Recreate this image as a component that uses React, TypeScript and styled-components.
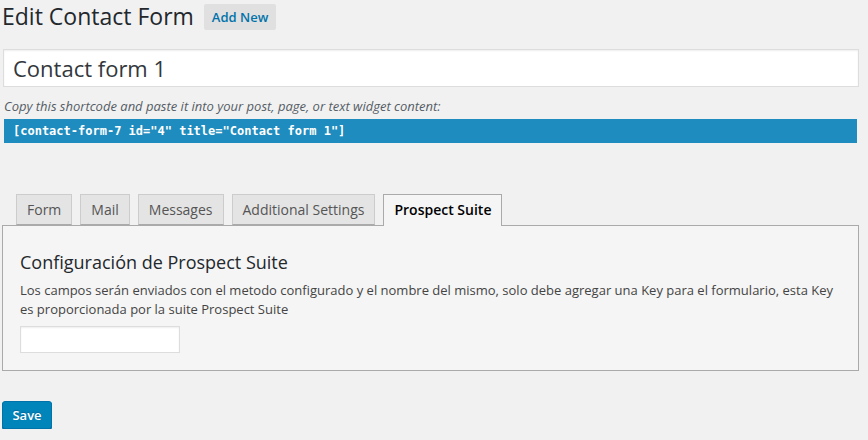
import React from "react";
import styled, { createGlobalStyle } from "styled-components";

const Global = createGlobalStyle`
  html, body { margin: 0; padding: 0; background: #f1f1f1; }
  body { font-family: "Open Sans", "Noto Sans", sans-serif; color: #444; }
  * { box-sizing: border-box; }
`;

const Wrap = styled.div`
  width: 857px;
  margin-left: 2px;
  display: flex;
  flex-direction: column;
`;

const Header = styled.div`
  display: flex;
  align-items: flex-start;
  gap: 10px;
  height: 49px;
`;

const Title = styled.h1`
  margin: 2px 0 0 0;
  font-size: 23px;
  line-height: 29px;
  font-weight: 400;
  color: #23282d;
`;

const AddNew = styled.button`
  margin-top: 4px;
  height: 26px;
  padding: 0 8px;
  border: none;
  border-radius: 2px;
  background: #e0e0e0;
  color: #0073aa;
  font-family: inherit;
  font-size: 13px;
  font-weight: 600;
  line-height: 26px;
`;

const TitleInput = styled.input`
  margin-left: 1px;
  width: 856px;
  height: 38px;
  padding: 0 9px;
  border: 1px solid #ddd;
  box-shadow: inset 0 1px 2px rgba(0, 0, 0, 0.07);
  background: #fff;
  font-family: inherit;
  font-size: 22px;
  color: #32373c;
  outline: none;
`;

const Hint = styled.p`
  margin: 10px 0 4px 2px;
  font-size: 13px;
  line-height: 18px;
  font-style: italic;
  color: #555d66;
`;

const Shortcode = styled.div`
  margin: 0 2px;
  height: 24px;
  padding: 0 9px;
  background: #1e8cbe;
  color: #fff;
  font-family: "DejaVu Sans Mono", "Liberation Mono", monospace;
  font-weight: 700;
  font-size: 12px;
  line-height: 24px;
`;

const Tabs = styled.div`
  display: flex;
  gap: 8px;
  margin: 51px 0 -1px 14px;
  position: relative;
  z-index: 1;
`;

const Tab = styled.div<{ $active?: boolean }>`
  height: ${(p) => (p.$active ? "32px" : "31px")};
  padding: 0 10px;
  border: 1px solid ${(p) => (p.$active ? "#aaa" : "#ccc")};
  border-bottom: ${(p) => (p.$active ? "none" : "1px solid #aaa")};
  background: ${(p) => (p.$active ? "#f5f5f5" : "#e4e4e4")};
  color: ${(p) => (p.$active ? "#000" : "#555")};
  font-size: 14px;
  font-weight: ${(p) => (p.$active ? 600 : 400)};
  line-height: 29px;
  white-space: nowrap;
`;

const Panel = styled.div`
  border: 1px solid #aaa;
  background: #f5f5f5;
  padding: 24px 17px 17px 17px;
  display: flex;
  flex-direction: column;
  align-items: flex-start;
`;

const PanelTitle = styled.h3`
  margin: 0;
  font-size: 18px;
  line-height: 24px;
  font-weight: 400;
  color: #23282d;
`;

const PanelText = styled.p`
  margin: 6.5px 0 6.5px 0;
  font-size: 13px;
  line-height: 19.5px;
  color: #444;
`;

const KeyInput = styled.input`
  width: 160px;
  height: 27px;
  border: 1px solid #ddd;
  box-shadow: inset 0 1px 2px rgba(0, 0, 0, 0.07);
  background: #fff;
  outline: none;
`;

const SaveButton = styled.button`
  align-self: flex-start;
  margin-top: 30px;
  width: 50px;
  height: 28px;
  padding: 0;
  border: 1px solid #0073aa;
  border-radius: 3px;
  background: #0085ba;
  box-shadow: 0 1px 0 #006799;
  color: #fff;
  font-family: inherit;
  font-size: 13px;
  font-weight: 600;
  text-shadow: 0 -1px 1px #006799;
`;

export default function App() {
  return (
    <>
      <Global />
      <Wrap>
        <Header>
          <Title>Edit Contact Form</Title>
          <AddNew>Add New</AddNew>
        </Header>
        <TitleInput defaultValue="Contact form 1" />
        <Hint>Copy this shortcode and paste it into your post, page, or text widget content:</Hint>
        <Shortcode>[contact-form-7 id="4" title="Contact form 1"]</Shortcode>
        <Tabs>
          <Tab>Form</Tab>
          <Tab>Mail</Tab>
          <Tab>Messages</Tab>
          <Tab>Additional Settings</Tab>
          <Tab $active>Prospect Suite</Tab>
        </Tabs>
        <Panel>
          <PanelTitle>Configuración de Prospect Suite</PanelTitle>
          <PanelText>
            Los campos serán enviados con el metodo configurado y el nombre del mismo, solo debe agregar una Key para el formulario, esta Key es proporcionada por la suite Prospect Suite
          </PanelText>
          <KeyInput />
        </Panel>
        <SaveButton>Save</SaveButton>
      </Wrap>
    </>
  );
}
